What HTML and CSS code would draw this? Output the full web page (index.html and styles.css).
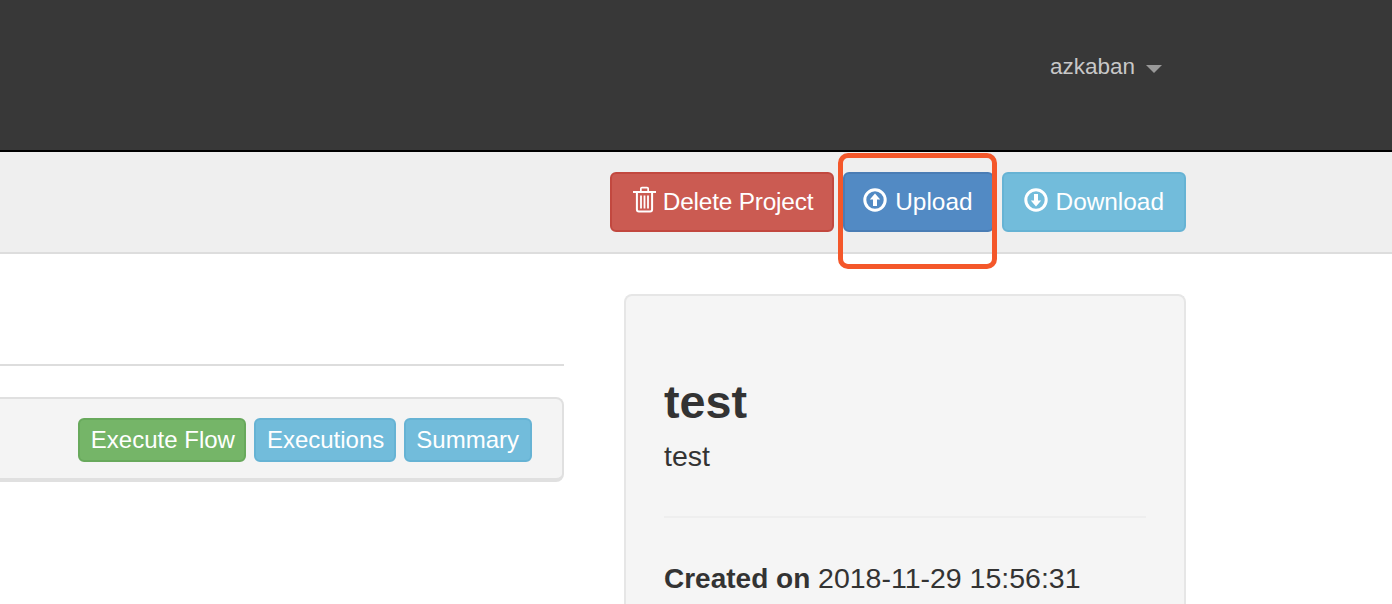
FILE: index.html
```html
<!DOCTYPE html>
<html lang="en">
<head>
<meta charset="utf-8">
<title>Azkaban project</title>
<link rel="stylesheet" href="styles.css">
</head>
<body>
<header class="topbar">
  <a class="user">azkaban<span class="caret"></span></a>
</header>
<section class="subbar">
  <a class="btn btn-danger btn-delete">
    <svg class="icon-trash" viewBox="0 0 23 27" aria-hidden="true"><path d="M0 5h23v2H0zM7 5V2.500Q7 .8 9 .8h5q2 0 2 1.700V5h-1.700V2.500H8.700V5z" fill="#fff"/><path d="M3.900 7v16.500q0 2 2 2h11.200q2 0 2-2V7" fill="none" stroke="#fff" stroke-width="2"/><path d="M8 9.500v13M11.500 9.500v13M15 9.500v13" stroke="#fff" stroke-width="1.800"/></svg>
    <span class="label-tight">Delete Project</span>
  </a>
  <a class="btn btn-primary btn-upload">
    <svg class="icon-circle" viewBox="0 0 24 24" aria-hidden="true"><circle cx="12" cy="12" r="10.200" fill="none" stroke="#fff" stroke-width="3"/><path d="M12 5.500l5.200 6h-3.200v6.500h-4v-6.500H6.800z" fill="#fff"/></svg>
    Upload
  </a>
  <a class="btn btn-info btn-download">
    <svg class="icon-circle" viewBox="0 0 24 24" aria-hidden="true"><circle cx="12" cy="12" r="10.200" fill="none" stroke="#fff" stroke-width="3"/><path d="M12 18.500l5.200-6h-3.200V6h-4v6.500H6.800z" fill="#fff"/></svg>
    Download
  </a>
  <div class="annotation"></div>
</section>
<main class="content">
  <div class="flows">
    <hr class="flows-rule">
    <div class="flow-row">
      <a class="btn btn-sm btn-success">Execute Flow</a>
      <a class="btn btn-sm btn-info">Executions</a>
      <a class="btn btn-sm btn-info btn-last">Summary</a>
    </div>
  </div>
  <aside class="well">
    <h1 class="well-title">test</h1>
    <p class="well-desc">test</p>
    <hr class="well-rule">
    <p class="well-meta"><strong>Created on</strong> <span class="well-date">2018-11-29 15:56:31</span></p>
  </aside>
</main>
</body>
</html>
```

FILE: styles.css
```css
* { box-sizing: border-box; }
html, body { margin: 0; height: 604px; overflow: hidden; }
body {
  position: relative;
  background: #fff;
  color: #333;
  font-family: "Liberation Sans", Arial, sans-serif;
  font-size: 28px;
}
.topbar {
  height: 152px;
  background: #383838;
  border-bottom: 2px solid #000;
  display: flex;
  justify-content: flex-end;
  align-items: center;
  padding: 0 230px 16px 0;
}
.user { color: #c8c8c8; font-size: 22.500px; line-height: 30px; display: flex; align-items: center; }
.caret {
  margin-left: 11px;
  margin-top: 3px;
  border-top: 8px solid #999;
  border-left: 8px solid transparent;
  border-right: 8px solid transparent;
}
.subbar {
  position: relative;
  height: 102px;
  background: #efefef;
  border-bottom: 2px solid #ddd;
  display: flex;
  justify-content: flex-end;
  align-items: flex-start;
  padding: 20px 206px 0 0;
}
.btn {
  display: flex;
  align-items: center;
  height: 60px;
  border: 2px solid;
  border-radius: 6px;
  color: #fff;
  font-size: 24.400px;
  white-space: nowrap;
}
.label-tight { letter-spacing: -0.2px; }
.btn-delete { margin-right: 9px; padding: 0 19px 0 21px; }
.btn-upload { margin-right: 9px; padding: 0 19px 0 18px; }
.btn-download { margin-left: -1px; padding: 0 20px; }
.btn-danger { background: #cb5b52; border-color: #c2483f; }
.btn-primary { background: #528ac4; border-color: #4a7db5; }
.btn-info { background: #72bcdb; border-color: #66b3d4; }
.btn-success { background: #75b568; border-color: #68a95c; }
.btn-sm { height: 44px; padding: 0 10px 0 11px; font-size: 24px; }
.btn-sm.btn-success { padding-right: 9px; }
.btn-sm.btn-last { padding: 0 11px 0 10px; }
.icon-trash { width: 23px; height: 27px; margin: 0 7px 6px 0; flex: none; }
.icon-circle { width: 24px; height: 24px; margin: -4px 8px 0 0; flex: none; }
.annotation {
  position: absolute;
  left: 838px;
  top: 1px;
  width: 159px;
  height: 116px;
  border: 5px solid #f4572a;
  border-radius: 10px;
}
.content {
  display: grid;
  grid-template-columns: 564px 562px;
  column-gap: 60px;
  padding-top: 40px;
}
.flows { padding-top: 70px; }
.flows-rule { margin: 0 0 31px; border: 0; height: 2px; background: #ddd; }
.flow-row {
  height: 85px;
  background: #f4f4f4;
  border: 2px solid #e0e0e0;
  border-left: 0;
  border-bottom-width: 4px;
  border-radius: 0 8px 8px 0;
  display: flex;
  justify-content: flex-end;
  gap: 8px;
  padding: 19px 30px 0 0;
}
.well {
  height: 310px;
  background: #f5f5f5;
  border: 2px solid #e6e6e6;
  border-bottom: 0;
  border-radius: 8px 8px 0 0;
  padding: 78px 38px 0;
}
.well-title { margin: 0; font-size: 46.700px; line-height: 56px; font-weight: 700; }
.well-desc { margin: 6px 0 0; line-height: 40px; font-size: 28.500px; }
.well-rule { margin: 40px 0 0; border: 0; height: 2px; background: #eee; }
.well-meta { margin: 40px 0 0; line-height: 40px; }
.well-date { font-size: 28.500px; }
```
